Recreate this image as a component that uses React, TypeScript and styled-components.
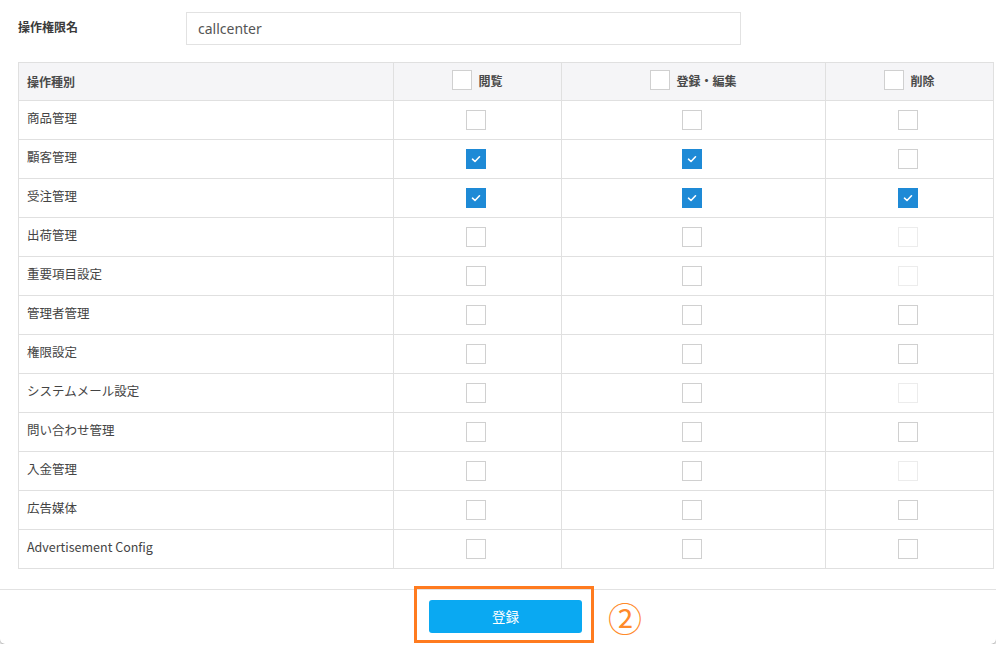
import React from "react";
import styled, { createGlobalStyle } from "styled-components";

const GlobalStyle = createGlobalStyle`
  html, body {
    margin: 0;
    padding: 0;
    background: #ffffff;
  }
  body {
    font-family: "Noto Sans CJK JP", "Noto Sans", "Liberation Sans", sans-serif;
    color: #333;
  }
`;

const Card = styled.div`
  width: 996px;
  height: 644px;
  box-sizing: border-box;
  background: #fff;
  border-radius: 0 0 5px 5px;
  box-shadow: 0 1px 3px rgba(0, 0, 0, 0.45);
  display: flex;
  flex-direction: column;
`;

const Body = styled.div`
  padding: 12px 3px 0 18px;
  flex: 1;
`;

const FormRow = styled.div`
  display: flex;
  align-items: center;
`;

const Label = styled.div`
  width: 168px;
  font-size: 12px;
  font-weight: 700;
  color: #3a3a3a;
  padding-bottom: 4px;
`;

const Input = styled.div`
  width: 555px;
  height: 33px;
  box-sizing: border-box;
  border: 1px solid #e2e2e2;
  padding: 0 11px;
  display: flex;
  align-items: center;
  font-size: 14px;
  color: #555;
  font-family: "Noto Sans", "Liberation Sans", sans-serif;
`;

const Table = styled.table`
  margin-top: 17px;
  width: 975px;
  border-collapse: collapse;
  table-layout: fixed;
  font-size: 12.5px;
`;

const HeadCell = styled.th<{ $center?: boolean }>`
  height: 37px;
  background: #f5f5f7;
  border: 1px solid #e0e0e0;
  font-weight: 700;
  font-size: 12px;
  color: #4a4a4a;
  text-align: ${(p) => (p.$center ? "center" : "left")};
  padding: 0 8px;
`;

const HeadInner = styled.span`
  display: inline-flex;
  align-items: center;
  gap: 6px;
`;

const Cell = styled.td<{ $center?: boolean }>`
  height: ${(p) => (p.$center ? "36px" : "32px")};
  border: 1px solid #e0e0e0;
  padding: ${(p) => (p.$center ? "0 10px 2px 6px" : "0 8px 6px")};
  text-align: ${(p) => (p.$center ? "center" : "left")};
  vertical-align: middle;
  color: #444;
`;

const Box = styled.span<{ $checked?: boolean; $disabled?: boolean }>`
  display: inline-flex;
  align-items: center;
  justify-content: center;
  width: 20px;
  height: 20px;
  box-sizing: border-box;
  vertical-align: middle;
  border: 1px solid
    ${(p) => (p.$checked ? "#1e8ad6" : p.$disabled ? "#ececec" : "#d0d0d0")};
  background: ${(p) => (p.$checked ? "#1e8ad6" : "#fff")};
`;

const Footer = styled.div`
  border-top: 1px solid #e2e2e2;
  height: 55px;
  box-sizing: border-box;
  padding: 0 0 2px 15px;
  display: flex;
  align-items: center;
  justify-content: center;
  margin-top: 19px;
`;

const ButtonWrap = styled.div`
  position: relative;
`;

const Button = styled.button`
  width: 153px;
  height: 33px;
  border: none;
  border-radius: 3px;
  background: #0aa9f2;
  color: #fff;
  font-size: 13.5px;
  font-family: "Noto Sans CJK JP", sans-serif;
  display: block;
`;

/* annotation overlay drawn over the screenshot */
const Highlight = styled.div`
  position: absolute;
  left: -15px;
  top: -14px;
  width: 180px;
  height: 57px;
  box-sizing: border-box;
  border: 3px solid #ff7b1f;
  pointer-events: none;
`;

const Marker = styled.span`
  position: absolute;
  left: 179px;
  top: 1px;
  color: #ff8a2a;
  font-size: 34px;
  line-height: 34px;
  font-family: "Noto Sans CJK JP", "DejaVu Sans", sans-serif;
`;

const Check = () => (
  <svg width="12" height="12" viewBox="0 0 12 12">
    <path
      d="M2.5 6.2 L5 8.5 L9.5 3.8"
      fill="none"
      stroke="#fff"
      strokeWidth="1.6"
      strokeLinecap="round"
      strokeLinejoin="round"
    />
  </svg>
);

type Perm = { name: string; view: boolean; edit: boolean; del: boolean; delDisabled?: boolean };

const rows: Perm[] = [
  { name: "商品管理", view: false, edit: false, del: false },
  { name: "顧客管理", view: true, edit: true, del: false },
  { name: "受注管理", view: true, edit: true, del: true },
  { name: "出荷管理", view: false, edit: false, del: false, delDisabled: true },
  { name: "重要項目設定", view: false, edit: false, del: false, delDisabled: true },
  { name: "管理者管理", view: false, edit: false, del: false },
  { name: "権限設定", view: false, edit: false, del: false },
  { name: "システムメール設定", view: false, edit: false, del: false, delDisabled: true },
  { name: "問い合わせ管理", view: false, edit: false, del: false },
  { name: "入金管理", view: false, edit: false, del: false, delDisabled: true },
  { name: "広告媒体", view: false, edit: false, del: false },
  { name: "Advertisement Config", view: false, edit: false, del: false },
];

const CheckBox: React.FC<{ checked: boolean; disabled?: boolean }> = ({ checked, disabled }) => (
  <Box $checked={checked} $disabled={disabled}>
    {checked && <Check />}
  </Box>
);

const columns = ["閲覧", "登録・編集", "削除"];

export default function App() {
  return (
    <>
      <GlobalStyle />
      <Card>
        <Body>
          <FormRow>
            <Label>操作権限名</Label>
            <Input>callcenter</Input>
          </FormRow>
          <Table>
            <colgroup>
              <col style={{ width: 375 }} />
              <col style={{ width: 168 }} />
              <col style={{ width: 264 }} />
              <col style={{ width: 168 }} />
            </colgroup>
            <thead>
              <tr>
                <HeadCell>操作種別</HeadCell>
                {columns.map((c) => (
                  <HeadCell $center key={c}>
                    <HeadInner>
                      <CheckBox checked={false} />
                      {c}
                    </HeadInner>
                  </HeadCell>
                ))}
              </tr>
            </thead>
            <tbody>
              {rows.map((r) => (
                <tr key={r.name}>
                  <Cell>{r.name}</Cell>
                  <Cell $center>
                    <CheckBox checked={r.view} />
                  </Cell>
                  <Cell $center>
                    <CheckBox checked={r.edit} />
                  </Cell>
                  <Cell $center>
                    <CheckBox checked={r.del} disabled={r.delDisabled} />
                  </Cell>
                </tr>
              ))}
            </tbody>
          </Table>
        </Body>
        <Footer>
          <ButtonWrap>
            <Button>登録</Button>
            <Highlight />
            <Marker>②</Marker>
          </ButtonWrap>
        </Footer>
      </Card>
    </>
  );
}
